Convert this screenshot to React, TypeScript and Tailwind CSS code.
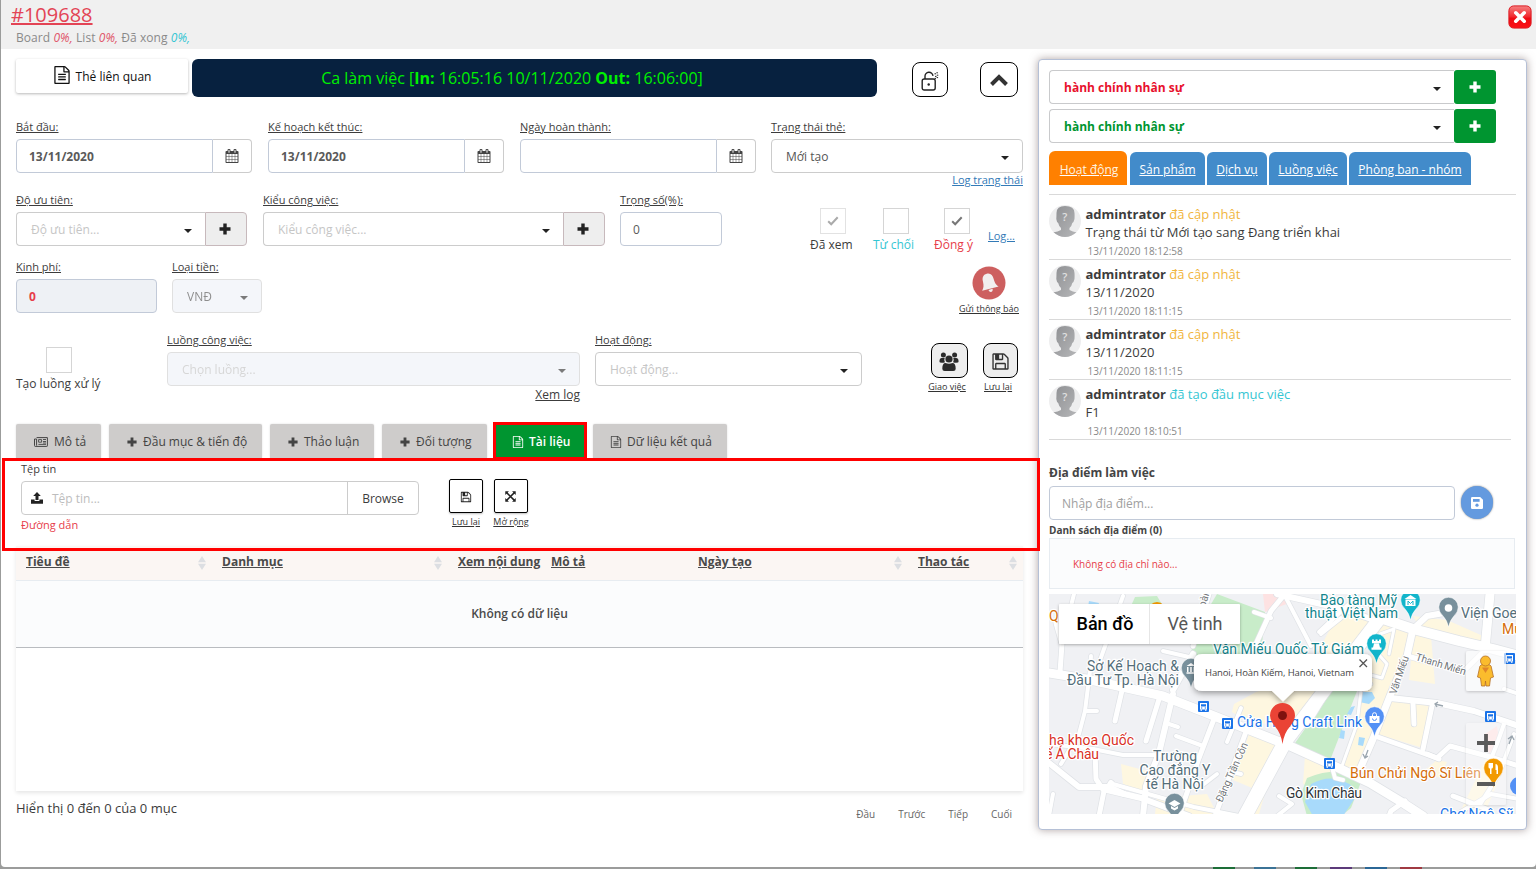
import React from "react";

/* ---------- icons ---------- */

type IconProps = { className?: string };

const fa = (d: string) =>
  function Icon({ className = "" }: IconProps) {
    return (
      <svg viewBox="0 0 1792 1792" className={`shrink-0 fill-current ${className}`}>
        <path d={d} />
      </svg>
    );
  };

const FileText = fa(
  "M1596 380q28 28 48 76t20 88v1152q0 40-28 68t-68 28h-1344q-40 0-68-28t-28-68v-1600q0-40 28-68t68-28h896q40 0 88 20t76 48zm-444-244v376h376q-10-29-22-41l-313-313q-12-12-41-22zm384 1528v-1024h-416q-40 0-68-28t-28-68v-416h-768v1536h1280zm-1024-864q0-14 9-23t23-9h704q14 0 23 9t9 23v64q0 14-9 23t-23 9h-704q-14 0-23-9t-9-23v-64zm736 224q14 0 23 9t9 23v64q0 14-9 23t-23 9h-704q-14 0-23-9t-9-23v-64q0-14 9-23t23-9h704zm0 256q14 0 23 9t9 23v64q0 14-9 23t-23 9h-704q-14 0-23-9t-9-23v-64q0-14 9-23t23-9h704z"
);
const Floppy = fa(
  "M512 1536h768v-384h-768v384zm896 0h128v-896q0-14-10-38.5t-20-34.5l-281-281q-10-10-34-20t-39-10v416q0 40-28 68t-68 28h-576q-40 0-68-28t-28-68v-416h-128v1280h128v-416q0-40 28-68t68-28h832q40 0 68 28t28 68v416zm-384-928v-320q0-13-9.5-22.5t-22.5-9.5h-192q-13 0-22.5 9.5t-9.5 22.5v320q0 13 9.5 22.5t22.5 9.5h192q13 0 22.5-9.5t9.5-22.5zm640 32v928q0 40-28 68t-68 28h-1344q-40 0-68-28t-28-68v-1344q0-40 28-68t68-28h928q40 0 88 20t76 48l280 280q28 28 48 76t20 88z"
);
const CalendarIcon = fa(
  "M192 1664h288v-288h-288v288zm352 0h320v-288h-320v288zm-352-352h288v-320h-288v320zm352 0h320v-320h-320v320zm-352-384h288v-288h-288v288zm736 736h320v-288h-320v288zm-384-736h320v-288h-320v288zm768 736h288v-288h-288v288zm-384-352h320v-320h-320v320zm-352-864v-288q0-13-9.5-22.5t-22.5-9.5h-64q-13 0-22.5 9.5t-9.5 22.5v288q0 13 9.5 22.5t22.5 9.5h64q13 0 22.5-9.5t9.5-22.5zm736 864h288v-320h-288v320zm-384-384h320v-288h-320v288zm384 0h288v-288h-288v288zm32-480v-288q0-13-9.5-22.5t-22.5-9.5h-64q-13 0-22.5 9.5t-9.5 22.5v288q0 13 9.5 22.5t22.5 9.5h64q13 0 22.5-9.5t9.5-22.5zm384-64v1280q0 52-38 90t-90 38h-1408q-52 0-90-38t-38-90v-1280q0-52 38-90t90-38h128v-96q0-66 47-113t113-47h64q66 0 113 47t47 113v96h384v-96q0-66 47-113t113-47h64q66 0 113 47t47 113v96h128q52 0 90 38t38 90z"
);

const Plus = ({ className = "" }: IconProps) => (
  <svg viewBox="0 0 12 12" className={`shrink-0 fill-current ${className}`}>
    <path d="M4.3 .5h3.4v3.8h3.8v3.4H7.7v3.8H4.3V7.7H.5V4.3h3.8z" />
  </svg>
);
const Caret = ({ className = "" }: IconProps) => (
  <svg viewBox="0 0 8 4" className={`h-1 w-2 shrink-0 ${className}`}>
    <path d="M0 0h8L4 4z" fill="currentColor" />
  </svg>
);
const Newspaper = () => (
  <svg viewBox="0 0 14 10" className="h-2.5 w-3.5 shrink-0" fill="none" stroke="currentColor">
    <path d="M2.6 .6h10.8v8.2q0 .6-.6.6H1.2q-.7 0-.7-.8V2h2.1v6.6" />
    <path d="M4.6 2.6h3v2.6h-3zM9 2.5h3M9 4.5h3M9 6h3M4.4 7.4H12" strokeWidth=".9" />
  </svg>
);
const Upload = () => (
  <svg viewBox="0 0 12 12" className="-mt-0.5 h-3 w-3 shrink-0 fill-current">
    <path d="M6 0l3.8 4H7.5v4h-3V4H2.2zM0 7.6h3.6v1.3h4.8V7.6H12v4.2H0z" />
  </svg>
);
const Expand = () => (
  <svg viewBox="0 0 12 12" className="h-[11px] w-[11px]" fill="none" stroke="currentColor" strokeWidth="1.6">
    <path d="M1.5 1.5l9 9M10.5 1.5l-9 9" />
    <path d="M.3.3h4L.3 4.300zM11.700.3v4L7.700.3zM.3 11.700v-4l4 4zM11.700 11.700h-4l4-4z" fill="currentColor" stroke="none" />
  </svg>
);
const Check = ({ className = "" }: IconProps) => (
  <svg viewBox="0 0 12 10" className={`h-2.5 w-3 ${className}`} fill="none" stroke="currentColor" strokeWidth="2">
    <path d="M1.200 5.300l3 3L10.700 1.300" />
  </svg>
);
const Unlock = () => (
  <svg viewBox="0 0 18 20" className="mt-0.5 h-5 w-[18px]" fill="none" stroke="#222" strokeWidth="1.400">
    <rect x="1.200" y="8" width="13" height="11" rx="2" />
    <path d="M4 8V5.500a4 4 0 0 1 8-.6" />
    <circle cx="7.700" cy="13.500" r="1.200" fill="#222" stroke="none" />
    <path d="M13.500 2.800h1.500M14 5.400h1.500M13.500 7.400h1.500M15.400 1.800h1.500M15.800 4.200h1.500M15.600 6.600h1.500" strokeWidth="1" />
  </svg>
);
const ChevronUp = () => (
  <svg viewBox="0 0 20 14" className="h-3.5 w-5" fill="none" stroke="#333" strokeWidth="4">
    <path d="M2.500 11.500L10 4l7.500 7.500" />
  </svg>
);
const Users = () => (
  <svg viewBox="0 0 20 20" className="mt-0.5 h-5 w-5 fill-[#2b2b2b]">
    <circle cx="4.400" cy="3" r="2.500" />
    <circle cx="15.600" cy="3" r="2.500" />
    <path d="M.5 10V8.500q0-2.500 2-2.500h3.200q-1 2 .2 4.200L4.500 10.700q-4 .3-4-.7zM19.500 10V8.500q0-2.500-2-2.500h-3.200q1 2-.2 4.200l1.400.5q4 .3 4-.7z" />
    <circle cx="10" cy="7" r="3.600" />
    <path d="M3.300 16.800q0-5.800 3.200-5.800 3.500 1.600 7 0 3.200 0 3.200 5.800 0 2.200-2.400 2.200H5.700q-2.400 0-2.400-2.200z" />
  </svg>
);
const Bell = () => (
  <svg viewBox="0 0 34 34" className="h-[34px] w-[34px]">
    <circle cx="17" cy="17" r="16.500" fill="#cd5f5f" />
    <g transform="rotate(-14 17 17)" fill="#f2eeee">
      <path d="M17 7.500c-4 0-5.500 3-5.500 6.500 0 4.500-1 6.500-3 8.800h17c-2-2.300-3-4.300-3-8.800 0-3.500-1.500-6.500-5.500-6.500z" />
      <path d="M14.800 23.600h4.400q-.3 2.600-2.200 2.600t-2.200-2.600z" />
    </g>
  </svg>
);
const CloseBadge = () => (
  <svg viewBox="0 0 24 24" className="h-6 w-6">
    <defs>
      <linearGradient id="closeFill" x1="0" y1="0" x2="0" y2="1">
        <stop offset="0" stopColor="#f58080" />
        <stop offset=".5" stopColor="#f1262d" />
        <stop offset=".55" stopColor="#ee0a12" />
        <stop offset="1" stopColor="#fb1016" />
      </linearGradient>
    </defs>
    <rect x=".9" y=".9" width="22.200" height="22.200" rx="4.800" fill="url(#closeFill)" stroke="#dc1a22" />
    <path d="M7.800 7.800l8.400 8.400M16.200 7.800l-8.400 8.400" stroke="#fff" strokeWidth="3.600" strokeLinecap="round" />
  </svg>
);
const SaveSolid = () => (
  <svg viewBox="0 0 12 12" className="h-3 w-3">
    <path d="M1.200 0h8L12 2.800v8q0 1.200-1.200 1.200H1.200Q0 12 0 10.800V1.200Q0 0 1.200 0z" fill="#fff" />
    <path d="M2 2h6.600v2.800H2z" fill="#649adf" />
    <circle cx="6" cy="8.200" r="1.600" fill="#649adf" />
  </svg>
);
const Avatar = () => (
  <svg viewBox="0 0 32 32" className="h-8 w-8 shrink-0">
    <defs>
      <linearGradient id="head" x1="0" y1="0" x2="1" y2="1">
        <stop offset="0" stopColor="#8e8f92" />
        <stop offset="1" stopColor="#b6b7b9" />
      </linearGradient>
      <clipPath id="round">
        <circle cx="16" cy="16" r="16" />
      </clipPath>
    </defs>
    <g clipPath="url(#round)">
      <rect width="32" height="32" fill="#eeeeef" />
      <path
        d="M7.500 8q0-7 8.500-7Q25.500 1 25.500 8q.2 2 0 6-.6 3-2.200 4-.5 3-2.800 5v2q3 1.500 7.500 2.500v6H4v-6q5-1 8-2.500v-2q-2.200-2-2.800-5-1.600-1-1.900-4 .2-3 .2-6z"
        fill="url(#head)"
      />
      <text x="15.700" y="16" textAnchor="middle" fill="#e0e0e0" className="font-['Open_Sans'] text-[11px] font-semibold">
        ?
      </text>
    </g>
  </svg>
);
const Sort = () => (
  <svg viewBox="0 0 8 14" className="mt-px h-3.5 w-2" fill="#dcdee2">
    <path d="M4 0l4 6.300H0zM4 14L0 7.700h8z" />
  </svg>
);

/* ---------- form pieces ---------- */

function Field({ label, className, children }: { label: string; className: string; children: React.ReactNode }) {
  return (
    <div className={`flex shrink-0 flex-col ${className}`}>
      <div className="mb-0.5 h-5 text-[11px] leading-5 whitespace-nowrap text-[#3c3c3c] underline">{label}</div>
      {children}
    </div>
  );
}

function DateInput({ value }: { value: string }) {
  return (
    <div className="flex h-[34px]">
      <div className="flex flex-1 items-center rounded-l border border-[#c2cad8] pt-0.5 pl-3 font-bold text-[#5a5a5a]">{value}</div>
      <div className="flex w-[39px] items-center justify-center rounded-r border border-l-0 border-[#ccc] text-[#444]">
        <CalendarIcon className="h-3.5 w-3.5" />
      </div>
    </div>
  );
}

function Select({ text, className = "", tone = "text-[#c6c6c6]" }: { text: string; className?: string; tone?: string }) {
  return (
    <div className={`flex h-[34px] items-center justify-between rounded border border-[#ccc] pt-0.5 pr-[13px] pl-3.5 ${className}`}>
      <span className={tone}>{text}</span>
      <Caret className="mt-0.5 text-[#222]" />
    </div>
  );
}

function AddButton() {
  return (
    <div className="flex h-[34px] w-[42px] shrink-0 items-center justify-center rounded-r border border-[#c7b9bc] bg-[#eee] pr-0.5 text-[#222]">
      <Plus className="h-3 w-3" />
    </div>
  );
}

function CheckBox({ label, width, tone, box, mark }: { label: string; width: string; tone: string; box: string; mark?: string }) {
  return (
    <div className={`flex shrink-0 flex-col ${width}`}>
      <div className={`flex h-[26px] w-[26px] items-center justify-center border ${box}`}>{mark && <Check className={mark} />}</div>
      <span className={`h-5 leading-[21px] whitespace-nowrap ${tone}`}>{label}</span>
    </div>
  );
}

/* ---------- main column ---------- */

function TopRow() {
  return (
    <div className="flex h-[68px] items-start pt-2.5">
      <div className="flex h-[34px] w-[172px] items-center justify-center rounded-xs bg-white pt-0.5 text-[#111] shadow-[0_1px_3px_rgba(0,0,0,0.28)]">
        <FileText className="mr-[5px] mb-1 h-[18px] w-[18px]" />
        Thẻ liên quan
      </div>
      <div className="ml-1 flex h-[38px] w-[685px] items-center justify-center rounded-md bg-[#07213f] pr-[45px] text-[16px] whitespace-pre text-[#00f000]">
        <span>
          Ca làm việc [<b>In:</b> 16:05:16 10/11/2020 <b>Out:</b> 16:06:00]
        </span>
      </div>
      <div className="mt-[3px] ml-[35px] flex h-[35px] w-9 items-center justify-center rounded-lg border border-black">
        <Unlock />
      </div>
      <div className="mt-[3px] ml-8 flex h-[35px] w-[38px] items-center justify-center rounded-lg border border-black">
        <ChevronUp />
      </div>
    </div>
  );
}

function DateRow() {
  return (
    <div className="flex h-[73px]">
      <Field label="Bắt đầu:" className="w-[236px]">
        <DateInput value="13/11/2020" />
      </Field>
      <Field label="Kế hoạch kết thúc:" className="ml-4 w-[236px]">
        <DateInput value="13/11/2020" />
      </Field>
      <Field label="Ngày hoàn thành:" className="ml-4 w-[236px]">
        <DateInput value="" />
      </Field>
      <Field label="Trạng thái thẻ:" className="ml-[15px] w-[252px]">
        <Select text="Mới tạo" tone="text-[#555]" />
        <div className="h-4 text-right text-[11px] leading-[14px] text-[#337ab7] underline">Log trạng thái</div>
      </Field>
    </div>
  );
}

function PriorityRow() {
  return (
    <div className="flex h-[67px]">
      <Field label="Độ ưu tiên:" className="w-[231px]">
        <div className="flex">
          <Select text="Độ ưu tiên..." className="flex-1 rounded-r-none border-r-0" />
          <AddButton />
        </div>
      </Field>
      <Field label="Kiểu công việc:" className="ml-4 w-[342px]">
        <div className="flex">
          <Select text="Kiểu công việc..." className="flex-1 rounded-r-none border-r-0" />
          <AddButton />
        </div>
      </Field>
      <Field label="Trọng số(%):" className="ml-[15px] w-[102px]">
        <div className="flex h-[34px] items-center rounded border border-[#c2cad8] pt-px pl-3 text-[#5a5a5a]">0</div>
      </Field>
      <div className="ml-[88px] flex gap-5 pt-[18px]">
        <CheckBox label="Đã xem" width="w-[43px]" tone="text-[#3c3c3c]" box="ml-2.5 border-[#e2e2e2]" mark="text-[#aaa]" />
        <CheckBox label="Từ chối" width="w-[41px]" tone="text-[#36c6d3]" box="ml-2.5 border-[#d5d5d5]" />
        <CheckBox label="Đồng ý" width="w-[39px]" tone="text-[#e73d4a]" box="ml-2.5 border-[#d5d5d5]" mark="text-[#777]" />
      </div>
      <div className="mr-2 ml-auto pt-9 text-[11px] leading-5 text-[#337ab7] underline">Log...</div>
    </div>
  );
}

function BudgetRow() {
  return (
    <div className="flex h-[73px]">
      <Field label="Kinh phí:" className="w-[141px]">
        <div className="flex h-[34px] items-center rounded border border-[#c2cad8] bg-[#eef1f5] pt-px pl-3 font-bold text-[#e73d4a]">0</div>
      </Field>
      <Field label="Loại tiền:" className="ml-[15px] w-[90px]">
        <Select text="VNĐ" className="bg-[#eef1f8] opacity-60" tone="text-[#444]" />
      </Field>
      <div className="mt-[9px] mr-1 ml-auto flex flex-col items-center">
        <Bell />
        <span className="text-[9px] leading-[18px] text-[#333] underline">Gửi thông báo</span>
      </div>
    </div>
  );
}

function FlowRow() {
  return (
    <div className="flex h-[92px]">
      <div className="w-[151px] pt-[17px]">
        <CheckBox label="Tạo luồng xử lý" width="w-[90px]" tone="text-[#3c3c3c]" box="ml-[30px] border-[#d5d5d5]" />
      </div>
      <Field label="Luồng công việc:" className="w-[413px]">
        <Select text="Chọn luồng..." className="bg-[#eef1f8] opacity-60" tone="text-[#bcbcbc]" />
        <div className="h-4 text-right leading-[18px] text-[#3c3c3c] underline">Xem log</div>
      </Field>
      <Field label="Hoạt động:" className="ml-[15px] w-[267px]">
        <Select text="Hoạt động..." />
      </Field>
      <div className="mt-[13px] ml-[66px] flex w-[38px] flex-col items-center">
        <div className="ml-1 flex h-[35px] w-[37px] items-center justify-center rounded-lg border border-black bg-[#eee]">
          <Users />
        </div>
        <span className="text-[9px] leading-[17px] whitespace-nowrap text-[#333] underline">Giao việc</span>
      </div>
      <div className="mt-[13px] ml-[17px] flex w-[35px] flex-col">
        <div className="flex h-[35px] w-[35px] items-center justify-center rounded-lg border border-black bg-[#eee] text-[#333]">
          <Floppy className="mt-0.5 h-[19px] w-[19px]" />
        </div>
        <span className="ml-px text-[9px] leading-[17px] whitespace-nowrap text-[#333] underline">Lưu lại</span>
      </div>
    </div>
  );
}

function Tab({ width, icon, text, active = false }: { width: string; icon: React.ReactNode; text: string; active?: boolean }) {
  return (
    <div
      className={`flex h-[34px] shrink-0 items-center pt-0.5 whitespace-nowrap ${width} ${
        active
          ? "relative bg-[#009530] pl-[17px] font-semibold text-white outline-3 -outline-offset-1 outline-[#ff0000]"
          : "rounded-t-xs bg-[#cecccb] pl-[18px] text-[#444] shadow-[0_0_2px_rgba(0,0,0,0.15)]"
      }`}
    >
      <span className="mr-1.5 flex">{icon}</span>
      {text}
    </div>
  );
}

function Tabs() {
  return (
    <div className="flex gap-2 pt-0">
      <Tab width="w-[85px]" icon={<Newspaper />} text="Mô tả" />
      <Tab width="w-[153px]" icon={<Plus className="h-2.5 w-2.5" />} text="Đầu mục & tiến độ" />
      <Tab width="w-[104px]" icon={<Plus className="h-2.5 w-2.5" />} text="Thảo luận" />
      <Tab width="w-[105px]" icon={<Plus className="h-2.5 w-2.5" />} text="Đối tượng" />
      <Tab width="w-[90px]" icon={<FileText className="-mr-px h-3 w-3" />} text="Tài liệu" active />
      <Tab width="w-[134px]" icon={<FileText className="-mr-px -ml-px h-3 w-3" />} text="Dữ liệu kết quả" />
    </div>
  );
}

function SquareButton({ label, children }: { label: string; children: React.ReactNode }) {
  return (
    <div className="flex w-[36px] flex-col items-center">
      <div className="flex h-[34px] w-[34px] items-center justify-center rounded-xs border border-black pt-px pr-px text-[#222] shadow-[0_1px_2px_rgba(0,0,0,0.25)]">
        {children}
      </div>
      <span className="text-[9px] leading-[17px] whitespace-nowrap text-[#333] underline">{label}</span>
    </div>
  );
}

function FileBar() {
  return (
    <div className="relative h-[88px] pl-[5px]">
      <div className="flex">
        <div className="w-[398px]">
          <div className="h-[23px] text-[11px] leading-[22px] text-[#3c3c3c]">Tệp tin</div>
          <div className="flex h-[34px] rounded border border-[#ccc]">
            <div className="flex flex-1 items-center gap-[9px] pt-0.5 pl-[9px] text-[#222]">
              <Upload />
              <span className="text-[#bdbdbd]">Tệp tin...</span>
            </div>
            <div className="flex w-[71px] items-center justify-center border-l border-[#ccc] pt-0.5 text-[#3c3c3c]">Browse</div>
          </div>
          <div className="text-[11px] leading-5 text-[#e73d4a]">Đường dẫn</div>
        </div>
        <div className="ml-[29px] flex gap-[9px] pt-[21px]">
          <SquareButton label="Lưu lại">
            <Floppy className="h-3 w-3" />
          </SquareButton>
          <SquareButton label="Mở rộng">
            <Expand />
          </SquareButton>
        </div>
      </div>
      <div className="pointer-events-none absolute top-0 -left-3.5 z-10 h-[93px] w-[1038px] border-3 border-[#ff0000]" />
    </div>
  );
}

const columns: [string, string, boolean][] = [
  ["Tiêu đề", "w-[196px]", true],
  ["Danh mục", "w-[236px]", true],
  ["Xem nội dung", "w-[93px]", false],
  ["Mô tả", "w-[147px]", false],
  ["Ngày tạo", "w-[220px]", true],
  ["Thao tác", "w-[115px]", true],
];

function DataTable() {
  return (
    <div className="h-[245px] bg-white shadow-[0_2px_4px_rgba(0,0,0,0.1)]">
      <div className="flex h-[35px] border-b border-[#e7ecf1] bg-[#fbf6f3]">
        {columns.map(([name, width, sortable]) => (
          <div key={name} className={`flex items-center justify-between pr-1.5 pb-0.5 pl-2.5 ${width}`}>
            <span className="font-bold whitespace-nowrap text-[#4a4a4a] underline">{name}</span>
            {sortable && <Sort />}
          </div>
        ))}
      </div>
      <div className="flex h-[67px] items-center justify-center border-b border-[#b9bcc0] bg-[#fbfcfd] font-semibold text-[#4a4a4a]">
        Không có dữ liệu
      </div>
    </div>
  );
}

function TableFooter() {
  return (
    <div className="flex justify-between">
      <div className="pt-[7px] text-[13px] leading-5 text-[#3c3c3c]">Hiển thị 0 đến 0 của 0 mục</div>
      <div className="flex gap-[23px] pt-3 pr-[11px] text-[10px] leading-[22px] text-[#666]">
        <span>Đầu</span>
        <span>Trước</span>
        <span>Tiếp</span>
        <span>Cuối</span>
      </div>
    </div>
  );
}

/* ---------- side panel ---------- */

function GroupSelect({ tone }: { tone: string }) {
  return (
    <div className="flex w-[447px]">
      <div className="flex h-[34px] flex-1 items-center justify-between rounded-l border border-r-0 border-[#c9cacc] pt-0.5 pr-[13px] pl-3.5">
        <span className={`font-bold ${tone}`}>hành chính nhân sự</span>
        <Caret className="mt-0.5 text-[#222]" />
      </div>
      <div className="flex h-[34px] w-[42px] items-center justify-center rounded-[3px] bg-[#009530] text-white">
        <Plus className="h-3 w-3" />
      </div>
    </div>
  );
}

const sideTabs: [string, string][] = [
  ["Sản phẩm", "w-[75px]"],
  ["Dịch vụ", "w-[60px]"],
  ["Luồng việc", "w-[78px]"],
  ["Phòng ban - nhóm", "w-[122px]"],
];

const feed: [string, string, string, string][] = [
  ["đã cập nhật", "text-[#f1b53d]", "Trạng thái từ Mới tạo sang Đang triển khai", "13/11/2020 18:12:58"],
  ["đã cập nhật", "text-[#f1b53d]", "13/11/2020", "13/11/2020 18:11:15"],
  ["đã cập nhật", "text-[#f1b53d]", "13/11/2020", "13/11/2020 18:11:15"],
  ["đã tạo đầu mục việc", "text-[#36c6d3]", "F1", "13/11/2020 18:10:51"],
];

function Side() {
  return (
    <div className="h-[771px] w-[489px] rounded border border-[#b5c0d6] bg-white pt-2.5 pl-2.5 shadow-[0_0_9px_rgba(110,90,90,0.55)]">
      <GroupSelect tone="text-[#e8112d]" />
      <div className="h-[5px]" />
      <GroupSelect tone="text-[#009530]" />
      <div className="mt-2 flex h-[34px] items-end gap-0.5 text-white underline">
        <div className="mr-px flex h-[34px] w-[78px] items-center justify-center rounded-t-md bg-[#ff8000] pt-1 pl-0.5 text-[#fff3e0]">Hoạt động</div>
        {sideTabs.map(([name, width]) => (
          <div key={name} className={`flex h-[33px] items-center justify-center rounded-t-md bg-[#428bca] pt-[3px] whitespace-nowrap ${width}`}>
            {name}
          </div>
        ))}
      </div>
      <div className="mt-[9px] w-[467px] border-t border-[#d9d9d9]" />
      <div className="pt-1">
        {feed.map(([action, tone, detail, time], i) => (
          <div key={i} className={`flex w-[462px] border-b border-[#d9d9d9] pt-1.5 ${i === 0 ? "h-[61px]" : "h-[60px]"}`}>
            <div className={i === 0 ? "" : "-mt-px"}>
              <Avatar />
            </div>
            <div className={`ml-[4.5px] text-[13px] text-[#3c3c3c] ${i === 0 ? "" : "-mt-px"}`}>
              <div className="h-[18px] leading-[18px]">
                <b>admintrator</b> <span className={tone}>{action}</span>
              </div>
              <div className="h-[18px] leading-[18px]">{detail}</div>
              <div className="pl-0.5 text-[10px] leading-[21px] text-[#888]">{time}</div>
            </div>
          </div>
        ))}
      </div>
      <div className="mt-[23px] h-[23px] leading-5 font-bold text-[#444]">Địa điểm làm việc</div>
      <div className="flex items-start gap-1.5">
        <div className="flex h-[34px] w-[406px] items-center rounded border border-[#c2cad8] pt-0.5 pl-3 text-[#a0a0a0]">Nhập địa điểm...</div>
        <div className="flex h-[33px] w-8 items-center justify-center rounded-full bg-[#649adf] pt-px shadow-[0_0_2px_rgba(0,0,0,0.5)]">
          <SaveSolid />
        </div>
      </div>
      <div className="h-[18px] text-[10px] leading-5 font-bold text-[#444]">Danh sách địa điểm (0)</div>
      <div className="flex h-[51px] w-[466px] items-center border border-[#e7ecf1] bg-[#fbfcfd] pl-[23px] text-[10px] text-[#e73d4a]">
        Không có địa chỉ nào...
      </div>
      <div className="mt-[5px]">
        <MapView />
      </div>
    </div>
  );
}

/* ---------- map ---------- */

const roads: [string, number][] = [
  ["M50 69L74 2", 4],
  ["M7 29L13 50 11 78", 5],
  ["M25 0L22 12", 4],
  ["M40 85L36 117 30 140 12 170", 4],
  ["M37 117L48 117", 4],
  ["M42 62L40 88", 4],
  ["M74 92L66 127", 5],
  ["M111 102L97 147", 5],
  ["M124 100L110 159 97 192 94 222", 6],
  ["M117 129L129 133M127 142L154 152", 4],
  ["M44 155L74 161 106 161", 4],
  ["M0 150L44 155", 4],
  ["M46 157L47 185 55 197 50 222", 5],
  ["M0 169L30 193 60 193 75 200", 6],
  ["M62 189L58 196 92 204 140 222", 6],
  ["M64 190L145 213 190 222", 4],
  ["M165 125L150 164 130 222", 5],
  ["M168 180L155 190M183 178L192 180", 4],
  ["M4 200L0 222", 4],
  ["M198 135L166 222", 5],
  ["M192 114L178 148", 4],
  ["M144 52L160 0", 5],
  ["M124 96L144 60", 6],
  ["M114 57L140 63", 4],
  ["M236 0L222 17 206 52", 5],
  ["M205 18L222 24", 4],
  ["M235 0L262 52", 4],
  ["M270 38L300 10M272 40L292 24", 4],
  ["M228 0L290 14 331 28", 6],
  ["M331 40L345 35 340 60M331 62L338 70 333 84 318 80", 3],
  ["M322 90L312 96 308 130 293 172", 3],
  ["M282 92L258 131", 5],
  ["M236 148L196 222", 14],
  ["M236 148L331 24", 13],
  ["M331 24L364 35 410 47 444 55 470 62", 10],
  ["M364 35L378 22 395 19", 6],
  ["M436 55L441 0", 9],
  ["M364 35L358 62 341 102 324 145 308 182", 7],
  ["M358 62L384 69M418 74L432 60", 5],
  ["M341 104L388 109 425 117 470 132", 6],
  ["M383 112L374 155", 5],
  ["M364 109L365 130", 5],
  ["M326 142L388 164 401 152 438 162 470 172", 5],
  ["M390 165L378 160", 5],
  ["M470 100L455 95M455 130L448 150 442 165M465 140L450 180 430 212", 4],
  ["M0 79L37 85 114 102 160 120 241 152 281 170 321 189 354 209 374 222", 9],
  ["M356 207L342 217 340 222M404 202L440 216", 5],
  ["M405 222L442 200 470 205", 4],
  ["M282 170L286 184 294 186", 4],
  ["M228 222L243 210 230 202", 4],
];

function Pin({ x, y, fill, children }: { x: number; y: number; fill: string; children?: React.ReactNode }) {
  return (
    <g transform={`translate(${x} ${y})`}>
      <path d="M0 18Q-1.500 11-5.500 7Q-9.700 3-9.700-2a9.700 9.700 0 0 1 19.400 0Q9.700 3 5.500 7Q1.500 11 0 18z" fill={fill} stroke="#fff" strokeWidth=".5" />
      {children}
    </g>
  );
}

function Bus({ x, y }: { x: number; y: number }) {
  return (
    <g transform={`translate(${x} ${y})`}>
      <rect x="-5.500" y="-5.500" width="11" height="11" rx="1" fill="#1a73e8" />
      <path d="M-3.500-3.500h7v6.500h-7z" fill="#fff" />
      <path d="M-2.500-2.300h5v2.400h-5zM-2.500 1.100h1.300v1h-1.300zM1.200 1.100h1.300v1H1.200z" fill="#1a73e8" />
      <path d="M-3 3h1.500v1.200H-3zM1.500 3H3v1.200H1.500z" fill="#fff" />
    </g>
  );
}

function Label({ x, y, w, fill, children, anchor = "start", size = 14 }: { x: number; y: number; w?: number; fill: string; children: string; anchor?: "start" | "middle" | "end"; size?: number }) {
  return (
    <text x={x} y={y} textLength={w} fill={fill} textAnchor={anchor} fontSize={size} stroke="#fff" strokeWidth="2.500" strokeLinejoin="round" paintOrder="stroke">
      {children}
    </text>
  );
}

function MapView() {
  return (
    <svg viewBox="0 0 467 220" width="467" height="220" className="block font-[Roboto,sans-serif]">
      <defs>
        <filter id="soft" x="-20%" y="-20%" width="140%" height="150%">
          <feDropShadow dx="0" dy="1" stdDeviation="1.500" floodOpacity=".3" />
        </filter>
        <filter id="deep" x="-20%" y="-20%" width="140%" height="170%">
          <feDropShadow dx="0" dy="2" stdDeviation="3" floodOpacity=".4" />
        </filter>
      </defs>
      <rect width="467" height="220" fill="#f0f1f4" />
      <g fill="#fef7e0">
        <path d="M185 110l22-12 30-8 36 2-30 44-50-12-10-6zM200 140l34 12-26 44-24-10z" />
        <path d="M290 18l36 6-40 44-14-16z" />
        <path d="M326 28l36 10-14 62-38 84-20-8 18-52 12-40z" />
        <path d="M366 38l16 4 4 48-26-4 4-40zM364 22l34 4 36 16-2 10-60-16z" />
        <path d="M344 104l36 8-6 42-46-14zM256 162l28 12-14 22-16-6zM438 162l20 6-22 50-24-2zM388 166l10 2-8 16-14-8z" />
        <path d="M72 170l30 8-6 20-22-8zM108 204l50-4 10 20h-62zM204 188l14 4-8 28h-16z" />
      </g>
      <g fill="#c8ecc9">
        <path d="M168 0l48 18-3 32-20 12h-52l8-30z" />
        <path d="M86 3l22-1 6 10H82z" />
        <path d="M324 26l10 3-22 32-8-4z" />
        <path d="M282 97h26l-28 72-38-14z" />
        <path d="M258 184q20-8 36-6l18 10-10 26-10 8h-34l-6-22z" />
      </g>
      <path d="M214 0l18-1 8 10-24 9zM436 140l12-8 2 14-10 14z" fill="#fde2e2" />
      <path d="M262 190q18-10 34-2 12 4 10 16l-12 18h-30l-8-14zM311 98h12l3 6-6 6-10-2zM302 113l4-1-4 9-4-1zM292 136l4 1-1 8-5-1zM310 143l6 1-2 8-5-1zM40 7l10 2-2 6-9-2z" fill="#a8dafb" />
      <g fill="none" stroke="#dfe2e6" strokeLinejoin="round" strokeLinecap="round">
        {roads.map(([d, w], i) => (
          <path key={i} d={d} strokeWidth={w + 1.4} />
        ))}
      </g>
      <g fill="none" stroke="#fff" strokeLinejoin="round" strokeLinecap="round">
        {roads.map(([d, w], i) => (
          <path key={i} d={d} strokeWidth={w} />
        ))}
      </g>
      <g fill="none" stroke="#9aa5ae" strokeWidth="1.300">
        <path d="M394 112l-8-2M389 108l-3 2 2 3M319 156l-3 8M314 160l2 4 3-2M460 150l3-8M459 145l4-3 2 4" />
      </g>

      <g stroke="#fff" strokeWidth="2" paintOrder="stroke" fill="#717579" fontSize="10.500">
        <text transform="translate(173 209) rotate(-66)" textLength="64">Đặng Trần Côn</text>
        <text transform="translate(347 101) rotate(-71)" textLength="40">Văn Miếu</text>
        <text transform="translate(366 66) rotate(17)" textLength="52">Thanh Miến</text>
        <text transform="translate(156 14) rotate(-72)">oài</text>
      </g>

      <Label x={0} y={27} fill="#d56e0c">Q</Label>
      <Label x={130} y={77} w={92} fill="#546e7a" anchor="end">Sở Kế Hoạch &amp;</Label>
      <Label x={130} y={91} w={112} fill="#546e7a" anchor="end">Đầu Tư Tp. Hà Nội</Label>
      <Label x={85} y={151} w={85} fill="#d93025" anchor="end">ha khoa Quốc</Label>
      <Label x={50} y={165} w={54} fill="#d93025" anchor="end">ế Á Châu</Label>
      <Label x={126} y={167} w={44} fill="#546e7a" anchor="middle">Trường</Label>
      <Label x={126} y={181} w={71} fill="#546e7a" anchor="middle">Cao đẳng Y</Label>
      <Label x={126} y={195} w={58} fill="#546e7a" anchor="middle">tế Hà Nội</Label>
      <Label x={164} y={60} w={151} fill="#12858d">Văn Miếu Quốc Tử Giám</Label>
      <Label x={348} y={10.5} w={77} fill="#12858d" anchor="end">Bảo tàng Mỹ</Label>
      <Label x={349} y={24} w={93} fill="#12858d" anchor="end">thuật Việt Nam</Label>
      <Label x={412} y={24} fill="#546e7a">Viện Goethe</Label>
      <Label x={453} y={40} fill="#d56e0c">Mu</Label>
      <Label x={188} y={133} w={125} fill="#1a73e8">Cửa Hàng Craft Link</Label>
      <Label x={301} y={184} w={131} fill="#d56e0c">Bún Chửi Ngô Sĩ Liên</Label>
      <Label x={237} y={204} w={76} fill="#2f3337">Gò Kim Châu</Label>
      <Label x={391} y={225} w={73} fill="#1a73e8">Chợ Ngô Sỹ</Label>

      <Bus x={154.5} y={112.5} />
      <Bus x={178.5} y={129.5} />
      <Bus x={280.5} y={169.5} />
      <Bus x={441.5} y={122.5} />
      <Bus x={460.5} y={64.500} />

      <circle cx="108" cy="17" r="9" fill="#f29900" />
      <Pin x={142} y={76} fill="#78909c">
        <path d="M-4.500-4L0-7l4.500 3zM-4-3h1.500v5H-4zM-.8-3H.8v5H-.8zM2.500-3H4v5H2.500zM-4.500 2.300h9v1.400h-9z" fill="#fff" />
      </Pin>
      <Pin x={361.5} y={8} fill="#12b5cb">
        <path d="M-6-3L0-7l6 4zM-5-2.500H5V4H-5z" fill="#fff" />
        <path d="M-2.500 3v-4L0 1.500 2.500-1v4" fill="none" stroke="#12b5cb" />
      </Pin>
      <Pin x={327.5} y={51.500} fill="#12b5cb">
        <path d="M-4.500-6h2v1.500h1.500V-6h2v1.500h1.500V-6h2v3.800h-9zM-2.500-2h5L3.500 2h1.500v2.200h-10V2h1.500z" fill="#fff" />
      </Pin>
      <Pin x={399.5} y={15} fill="#78909c">
        <circle cy="-1" r="3.800" fill="#fff" />
      </Pin>
      <Pin x={325.5} y={124.500} fill="#5491f5">
        <path d="M-5-2.500H5V4.500H-5z" fill="#fff" />
        <path d="M-2-2.500v-1.300a2 2 0 0 1 4 0v1.300" fill="none" stroke="#fff" />
        <path d="M-2 0a2 2 0 0 0 4 0" fill="none" stroke="#5491f5" />
      </Pin>
      <Pin x={125.500} y={211} fill="#78909c">
        <path d="M-6-1.500L0-5l6 3.500L0 2zM-3.500 1L0 3l3.500-2v2.500L0 5.500l-3.500-2z" fill="#fff" />
      </Pin>

      <g filter="url(#soft)">
        <rect x="10" y="10" width="181" height="40" rx="1" fill="#fff" />
      </g>
      <path d="M100.500 10v40" stroke="#e6e6e6" />
      <text x="27.500" y="36" fontSize="18" fontWeight="500" fill="#000" textLength="57">Bản đồ</text>
      <text x="118.500" y="36" fontSize="18" fill="#565656" textLength="55">Vệ tinh</text>

      <g filter="url(#deep)">
        <path d="M153 60H315q8 0 8 8V89q0 8-8 8H245L234 107.500 223 97H153q-8 0-8-8V68q0-8 8-8z" fill="#fff" />
      </g>
      <text x="156" y="82" fontSize="9.500" fill="#444" textLength="149" className="font-['Open_Sans']">
        Hanoi, Hoàn Kiếm, Hanoi, Vietnam
      </text>
      <path d="M310.500 65.500l7.500 7.500M318 65.500l-7.500 7.500" stroke="#555" strokeWidth="1.300" />

      <path d="M233.500 150Q232 139 226 132.500 221 126 221 121.500a12.500 12.500 0 0 1 25 0Q246 126 241 132.500 235 139 233.500 150z" fill="#ea4335" />
      <circle cx="233.500" cy="121.500" r="4.500" fill="#7f120f" />

      <rect x="417" y="57" width="40" height="40" rx="2" fill="#fff" opacity=".65" filter="url(#soft)" />
      <g stroke="#b5702a" strokeWidth=".8" fill="#fbbc2d">
        <path d="M430.500 74q0-4 6-4t6 4l2 9-3 1-1 8h-3.500l-.5-5-.5 5h-3.500l-1-8-3-1z" />
        <circle cx="436.500" cy="67" r="5" />
        <path d="M433 73.500h7L436.500 79z" fill="#e0862a" stroke="none" />
      </g>

      <rect x="417" y="129" width="40" height="82" rx="2" fill="#fff" opacity=".35" filter="url(#soft)" />
      <Pin x={444.5} y={176} fill="#f29900">
        <path d="M-5-7v4q0 1.500 1.500 1.500V4h1.500v-5.500Q-.5-1.500-.5-3v-4M2-6q2.500 0 2.500 4v6H3V0H2z" fill="#fff" />
      </Pin>
      <circle cx="470" cy="192" r="9" fill="#5491f5" />
      <path d="M428 149h18M437 140v18M428 190h18" stroke="#5a5a5a" strokeWidth="3.800" />
    </svg>
  );
}

/* ---------- page ---------- */

export default function App() {
  return (
    <div className="flex h-[869px] w-[1536px] flex-col overflow-hidden bg-[#9b9c9b] pl-px font-['Open_Sans','Noto_Sans',sans-serif] text-[12px] leading-5">
      <div className="h-[867px] shrink-0 rounded-b bg-white">
        <header className="flex h-[49px] justify-between bg-[#f0f0f0] pr-[4.5px] pl-2.5">
          <div>
            <div className="h-[28px] pt-0.5 text-[20px] leading-[25px] text-[#e34455] underline">#109688</div>
            <div className="pl-[5px] text-[12px] leading-5 tracking-[0.07px] text-[#8a8a8a]">
              Board <i className="text-[#e0566a]">0%,</i> List <i className="text-[#e0566a]">0%,</i> Đã xong <i className="text-[#36c6d3]">0%,</i>
            </div>
          </div>
          <div className="pt-[4.5px]">
            <CloseBadge />
          </div>
        </header>
        <div className="flex">
          <main className="w-[1022px] pl-[15px]">
            <TopRow />
            <DateRow />
            <PriorityRow />
            <BudgetRow />
            <FlowRow />
            <div className="pt-0.5">
              <Tabs />
            </div>
            <FileBar />
            <DataTable />
            <TableFooter />
          </main>
          <aside className="pt-[10px] pl-[15px]">
            <Side />
          </aside>
        </div>
      </div>
      <div className="flex h-0.5 gap-[13px] pl-[1212px]">
        <div className="mr-1.5 w-[22px] bg-[#1d6e38]" />
        <div className="mr-1.5 w-[22px] bg-[#3b7396]" />
        <div className="w-[22px] bg-[#1d6e38]" />
        <div className="w-[22px] bg-[#5c3a7a]" />
        <div className="w-[22px] bg-[#2b6796]" />
        <div className="w-[22px] bg-[#a03a42]" />
      </div>
    </div>
  );
}
